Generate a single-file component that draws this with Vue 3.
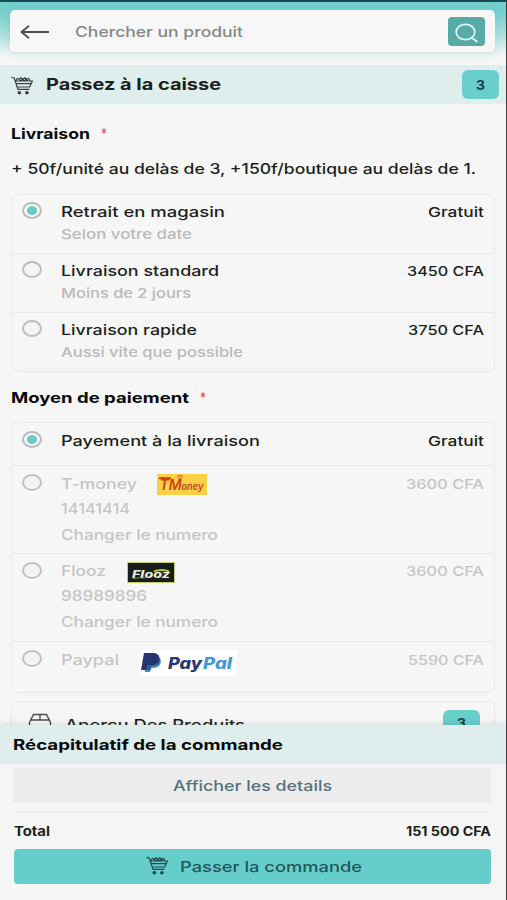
<script setup>
import { h } from 'vue'

// One line of wide lettering, set to a given width with its baseline 15px down.
const Line = (props) =>
  h('svg', { class: 'line', width: props.w, height: 20 }, [
    h('text', { x: 0, y: 15, fill: 'currentColor', textLength: props.w, lengthAdjust: 'spacingAndGlyphs' }, props.t),
  ])
Line.props = ['t', 'w']

const CartIcon = () =>
  h('svg', { class: 'cart', width: 22, height: 19, viewBox: '0 0 22 19', fill: 'none', stroke: 'currentColor', 'stroke-width': 1.2 }, [
    h('path', { d: 'M.5 1.4 3.2 2 7 13.4h11.5M4.5 5h16.8l-2.6 6H6.2M5.5 7.6h14.6M4.9 4.8l1.4-2.4 2 .8 1.5-1.5 2 1.6 2-1.6 1.7 1.5 2.2-.7 1.2 2.3M8 3.2l1.4 1.6 2-1.6 1.8 1.6 2-1.6 1.4 1.6' }),
    h('ellipse', { cx: 8.3, cy: 16.8, rx: 1.3, ry: 1.1, fill: 'currentColor' }),
    h('ellipse', { cx: 15.9, cy: 16.8, rx: 1.3, ry: 1.1, fill: 'currentColor' }),
  ])

const shipping = [
  { name: 'Retrait en magasin', w: 164, sub: 'Selon votre date', sw: 131, price: 'Gratuit', pw: 56, on: true },
  { name: 'Livraison standard', w: 158, sub: 'Moins de 2 jours', sw: 130, price: '3450 CFA', pw: 77 },
  { name: 'Livraison rapide', w: 136, sub: 'Aussi vite que possible', sw: 182, price: '3750 CFA', pw: 76 },
]
const payments = [
  { name: 'Payement à la livraison', w: 199, price: 'Gratuit', pw: 56, on: true, kind: 'cash' },
  { name: 'T-money', w: 76, number: '14141414', nw: 69, price: '3600 CFA', pw: 78, kind: 'tmoney' },
  { name: 'Flooz', w: 45, number: '98989896', nw: 86, price: '3600 CFA', pw: 78, kind: 'flooz' },
  { name: 'Paypal', w: 58, price: '5590 CFA', pw: 76, kind: 'paypal' },
]
</script>

<template>
  <div class="page">
    <header class="top">
      <div class="search">
        <svg class="back" width="30" height="16" viewBox="0 0 30 16" fill="none" stroke="#4b4d4d" stroke-width="1.8"><path d="M29 8H1.5M9 1.8 1.5 8 9 14.2" /></svg>
        <Line class="placeholder" t="Chercher un produit" :w="168" />
        <button class="find">
          <svg width="24" height="20" viewBox="0 0 24 20" fill="none" stroke="#d9f5f2" stroke-width="1.8"><ellipse cx="10.5" cy="9" rx="9.3" ry="7.7" /><path d="m16.500 14.500 6 4.500" /></svg>
        </button>
      </div>
    </header>

    <div class="titlebar">
      <CartIcon />
      <Line class="title" t="Passez à la caisse" :w="175" />
      <span class="count"><Line t="3" :w="9" /></span>
    </div>

    <main class="content">
      <div class="heading"><Line t="Livraison" :w="79" /><Line class="star" t="*" :w="6" /></div>
      <Line class="note" t="+ 50f/unité au delàs de 3, +150f/boutique au delàs de 1." :w="465" />
      <section class="card">
        <div v-for="o in shipping" :key="o.name" class="row ship">
          <span class="radio" :class="{ on: o.on }"></span>
          <div class="info">
            <Line class="name" :t="o.name" :w="o.w" />
            <Line class="sub" :t="o.sub" :w="o.sw" />
          </div>
          <Line class="price" :t="o.price" :w="o.pw" />
        </div>
      </section>

      <div class="heading second"><Line t="Moyen de paiement" :w="178" /><Line class="star" t="*" :w="6" /></div>
      <section class="card">
        <div v-for="o in payments" :key="o.name" class="row pay" :class="[o.kind, { off: !o.on }]">
          <span class="radio" :class="{ on: o.on }"></span>
          <div class="info">
            <div class="brand">
              <Line class="name" :t="o.name" :w="o.w" />
              <svg v-if="o.kind === 'tmoney'" class="logo" width="50" height="21" viewBox="0 0 50 21">
                <rect width="50" height="21" fill="#fbd044" />
                <g fill="#cc421f" font-weight="600" font-style="italic">
                  <text x="2.500" y="16" font-size="14">TM</text>
                  <text x="24.500" y="16" font-size="9.200">oney</text>
                </g>
                <path d="M2 4.200h12" fill="none" stroke="#cc421f" stroke-width="2" />
                <path d="M20 2.500q3-2 6 0m-5 2q2-1.400 4 0" fill="none" stroke="#d75a25" />
              </svg>
              <svg v-if="o.kind === 'flooz'" class="logo" width="48" height="21" viewBox="0 0 48 21">
                <rect x=".5" y=".5" width="47" height="20" fill="#191d1b" stroke="#c3d06a" />
                <path d="M27 9.500q8-3 15 0" fill="none" stroke="#b9ce2a" stroke-width="2" />
                <text x="5" y="16" font-size="10" font-weight="800" font-style="italic" fill="#e6eadb" textLength="38" lengthAdjust="spacingAndGlyphs">Flooz</text>
                <path d="M6 16.600q7-1.500 13-.6" fill="none" stroke="#b9ce2a" stroke-width=".6" />
              </svg>
              <svg v-if="o.kind === 'paypal'" class="logo" width="97" height="26" viewBox="0 0 97 26">
                <rect width="97" height="26" fill="#fff" />
                <path d="M7 6h9q6 1 4.700 7-1.500 5-8 5h-1.700L10 22H4.700z" fill="#3d91cd" />
                <path d="M4 3h10q6.500.800 5 7-1.500 5-8 5H7.500L6.500 20H1z" fill="#24356f" />
                <path d="M8.600 12.500h3q6 0 7.600-5 2 3-.5 6.500-2.500 2.500-7 2l-1 4H6.900z" fill="#223267" opacity=".55" />
                <g font-size="15.500" font-weight="800" font-style="italic">
                  <text x="28" y="19" fill="#243a78" textLength="34" lengthAdjust="spacingAndGlyphs">Pay</text>
                  <text x="63" y="19" fill="#419bd2" textLength="29" lengthAdjust="spacingAndGlyphs">Pal</text>
                </g>
              </svg>
            </div>
            <Line v-if="o.number" class="number" :t="o.number" :w="o.nw" />
            <Line v-if="o.number" class="change" t="Changer le numero" :w="157" />
          </div>
          <Line class="price" :t="o.price" :w="o.pw" />
        </div>
      </section>

      <section class="card preview">
        <svg class="box" width="24" height="24" viewBox="0 0 24 24" fill="none" stroke="#4a4c4c" stroke-width="1.400"><path d="M1.500 9.500 5.500 1.500h13l4 8v13h-21zM3 7h18M12 1.500V7" /></svg>
        <Line class="products" t="Aperçu Des Produits" :w="180" />
        <span class="count"><Line t="3" :w="9" /></span>
      </section>
    </main>

    <footer class="summary">
      <div class="recap"><Line t="Récapitulatif de la commande" :w="270" /></div>
      <div class="body">
        <button class="details"><Line t="Afficher les details" :w="159" /></button>
        <div class="total"><Line t="Total" :w="36" /><Line t="151 500 CFA" :w="85" /></div>
        <button class="order"><CartIcon /><Line t="Passer la commande" :w="182" /></button>
      </div>
    </footer>
  </div>
</template>

<style>
body { margin: 0; }
.line { display: block; flex: none; overflow: visible; }
.cart { display: block; flex: none; }
</style>

<style scoped>
.page {
  position: relative;
  box-sizing: border-box;
  width: 507px;
  height: 900px;
  overflow: hidden;
  border-top: 2px solid #174950;
  border-right: 1.5px solid #383d3f;
  background: #f6f6f6;
  color: #1c1f20;
  font: 500 14.5px Inter, "Open Sans", sans-serif;
}
button { border: 0; padding: 0; font: inherit; }
.top {
  box-sizing: border-box;
  height: 63px;
  padding: 8px 11px 0 10px;
  background: linear-gradient(#70cecb 0, #78d0cd 12px, #b5e3e0 36px, #f3f6f6 53px, #f6f6f6);
}
.search {
  display: flex;
  align-items: center;
  height: 42px;
  padding: 0 10px;
  border-radius: 5px;
  background: #f7f7f7;
  box-shadow: 0 2px 7px rgba(60, 90, 90, .13);
}
.back { margin: 2px 25px 0 0; }
.placeholder { margin-top: 2px; color: #858686; font-size: 14px; }
.find {
  display: grid;
  place-items: center;
  width: 37px;
  height: 29px;
  margin-left: auto;
  border-radius: 4px;
  background: #56aaa7;
}
.find svg { margin-top: 3px; }
.titlebar {
  display: flex;
  align-items: center;
  height: 39px;
  padding: 0 7px 0 11px;
  background: #dfeeed;
}
.titlebar .cart { color: #394142; margin-top: 2px; }
.title { margin-left: 13px; margin-top: 1px; font-size: 16px; font-weight: 650; }
.count {
  display: grid;
  place-items: center;
  width: 37px;
  height: 29px;
  margin-left: auto;
  border-radius: 6px;
  background: #68cfcb;
  color: #173d42;
  font-size: 13px;
  font-weight: 700;
}
.content { padding: 20px 11px 0; }
.heading { display: flex; gap: 11px; color: #070809; font-size: 14.5px; font-weight: 700; }
.star { color: #dc5257; font-weight: 500; }
.note { margin-top: 15px; font-size: 14.5px; }
.card {
  box-sizing: border-box;
  width: 484px;
  margin-top: 15px;
  border: 1px solid #e9eaea;
  border-radius: 6px;
}
.row {
  box-sizing: border-box;
  display: flex;
  padding: 7px 10px 0;
  border-bottom: 1px solid #e9eaea;
}
.row:last-child { border-bottom: 0; }
.ship { height: 59px; }
.ship:last-child { height: 58px; }
.radio {
  box-sizing: border-box;
  flex: none;
  width: 20px;
  height: 17px;
  margin-right: 19px;
  border: 2px solid #bcbdbd;
  border-radius: 50%;
  background: #f4f4f4;
}
.radio.on { background: radial-gradient(ellipse 5.5px 4.700px, #6acac5 85%, #f6f6f6 100%); }
.info { flex: 1; }
.sub { margin-top: 2px; color: #b9baba; font-size: 13.5px; font-weight: 450; }
.price { font-size: 13.5px; margin-top: -.5px; }
.second { margin-top: 16px; }
.second + .card { margin-top: 14px; }
.pay { padding-top: 8px; }
.pay .radio { margin-top: 0; }
.cash { height: 43px; }
.tmoney, .flooz { height: 88px; }
.flooz { padding-top: 7px; }
.flooz .radio { margin-top: 1px; }
.paypal { height: 50px; }
.off { color: #c4c5c5; font-weight: 450; }
.off .radio { border-color: #c2c3c3; }
.brand { display: flex; height: 20px; }
.logo { display: block; flex: none; margin-left: 20px; }
.flooz .logo { margin-top: 1px; margin-left: 21px; }
.paypal .logo { margin-left: 21px; }
.number { margin-top: 5px; }
.change { margin-top: 6px; font-size: 14px; }
.preview {
  display: flex;
  height: 100px;
  margin-top: 8px;
  padding: 8px 14px 0 16px;
}
.box { margin-top: 3px; }
.products { margin: 5px 0 0 13px; }
.preview .count { align-content: start; padding-top: 3px; box-sizing: border-box; }
.summary {
  position: absolute;
  right: 0;
  bottom: 0;
  left: 0;
  height: 175px;
  background: #f5f5f5;
  box-shadow: 0 -2px 6px rgba(60, 80, 80, .13);
}
.recap {
  height: 29px;
  padding: 10px 13px 0;
  background: #dfeeed;
  color: #070809;
  font-size: 14.5px;
  font-weight: 700;
}
.body { padding: 4px 14px 0; }
.details {
  display: grid;
  place-items: center;
  width: 477px;
  height: 35px;
  background: #ececec;
  color: #54717d;
}
.total {
  box-sizing: border-box;
  display: flex;
  justify-content: space-between;
  width: 477px;
  height: 38px;
  margin-top: 8px;
  padding-top: 9px;
  border-top: 1px solid #e9eaea;
  font-size: 13px;
  font-weight: 650;
}
.order {
  display: flex;
  justify-content: center;
  align-items: center;
  gap: 12px;
  width: 477px;
  height: 35px;
  padding-left: 3px;
  border-radius: 4px;
  background: #66ceca;
  color: #23565d;
}
.order .cart { margin-top: -3px; color: #1f484e; }
</style>
